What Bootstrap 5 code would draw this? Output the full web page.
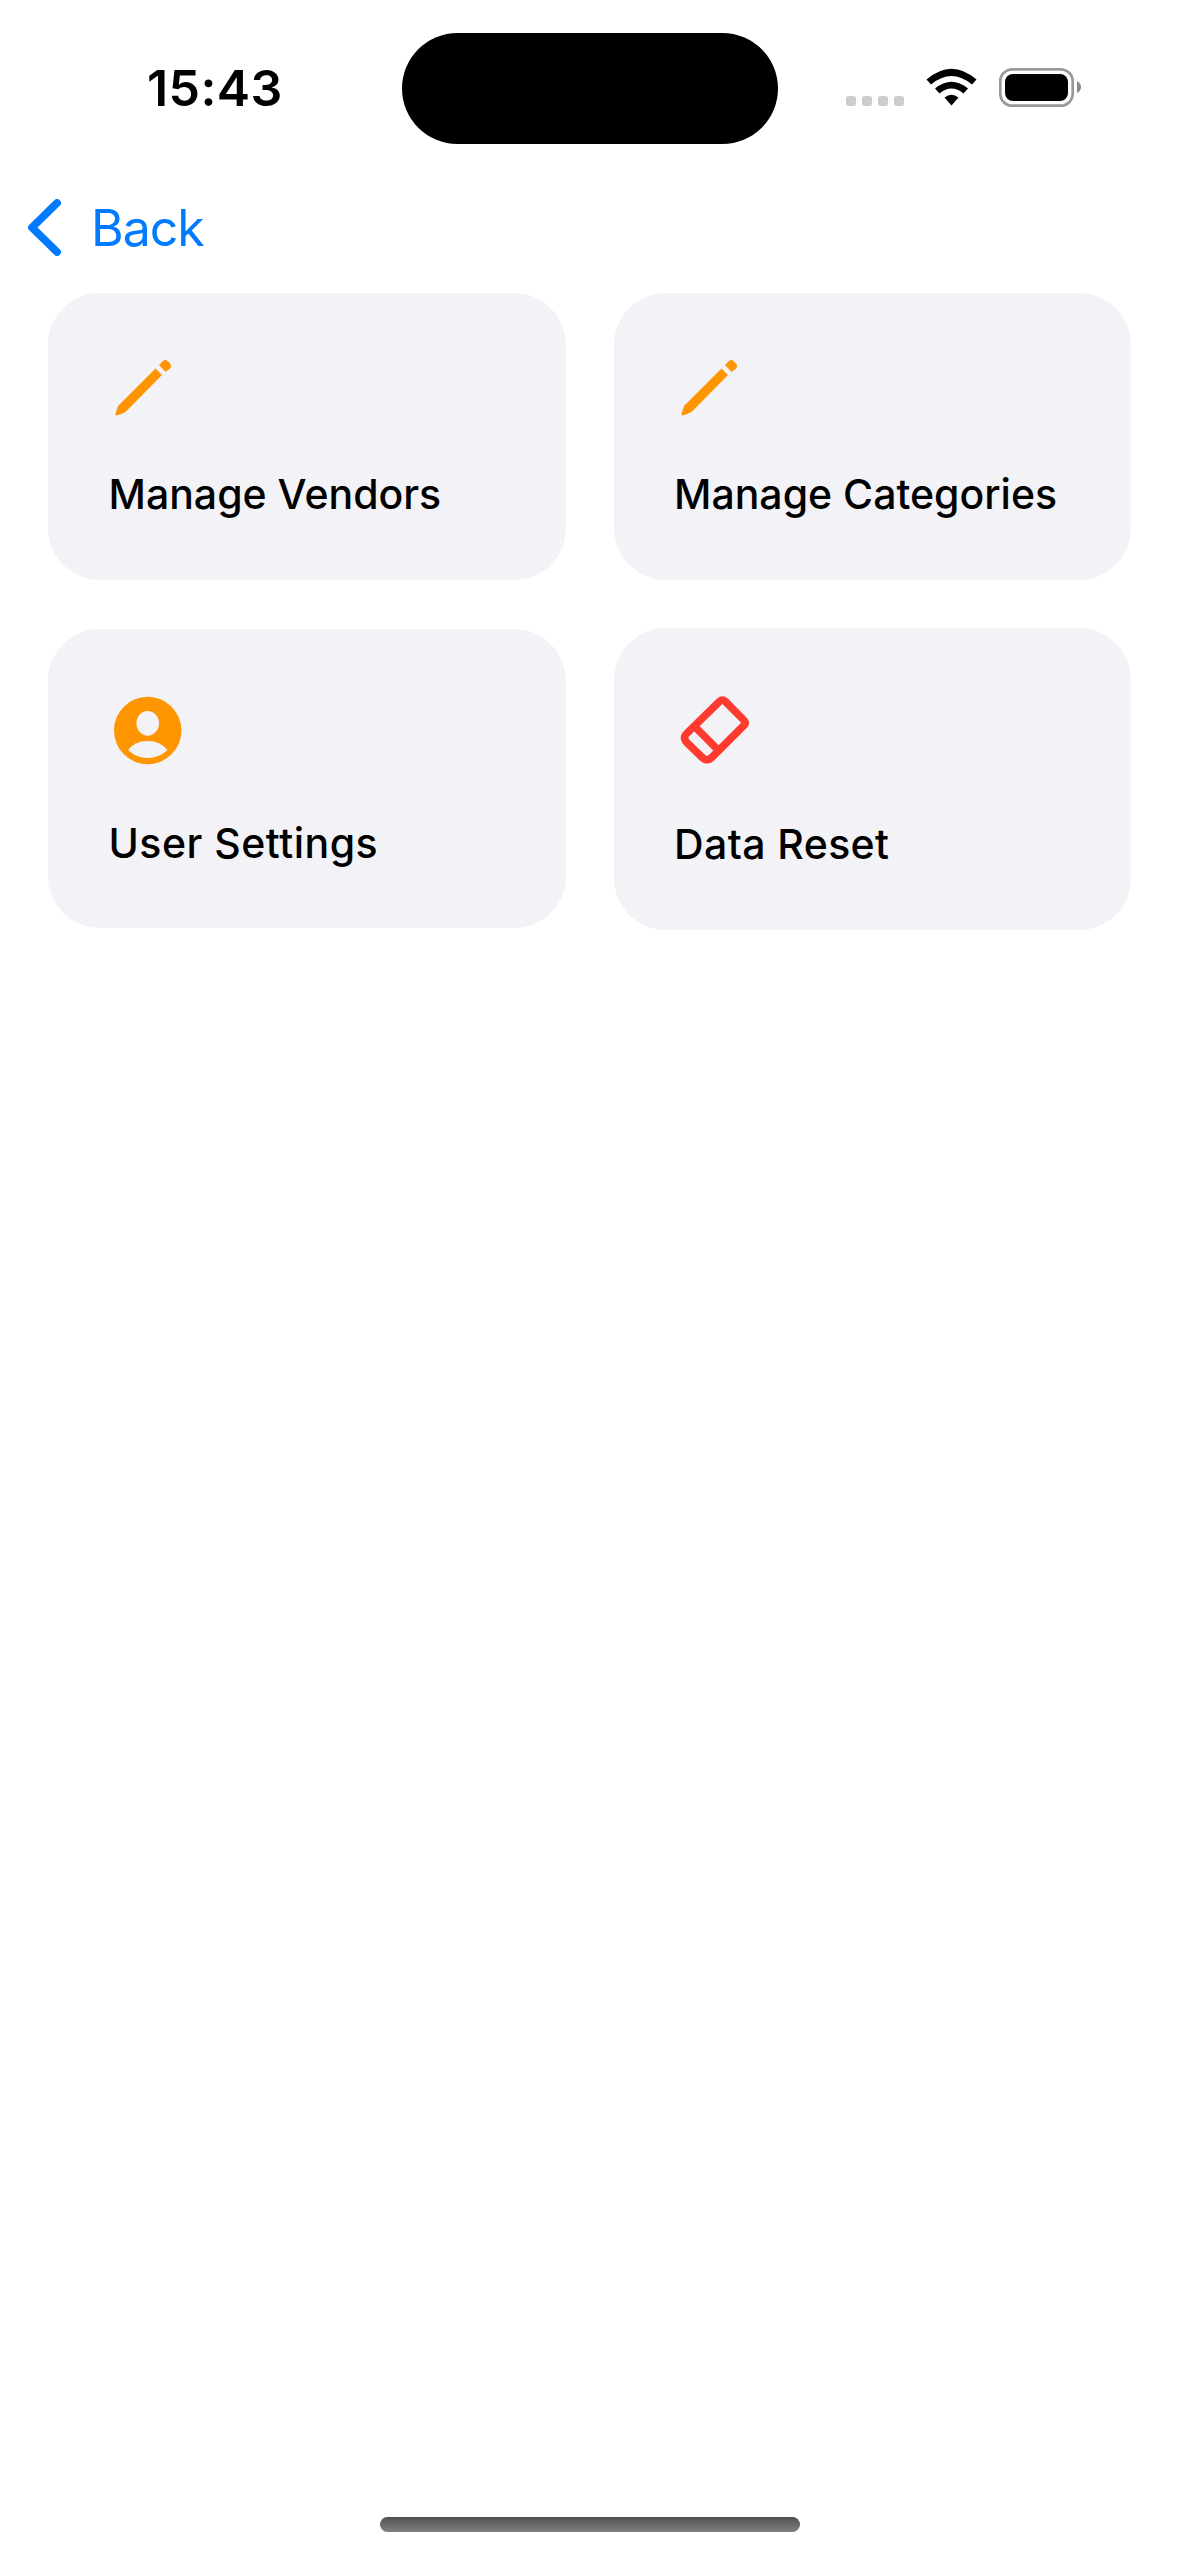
<!DOCTYPE html>
<html lang="en">
<head>
<meta charset="utf-8">
<meta name="viewport" content="width=device-width, initial-scale=1">
<title>Settings</title>
<link href="https://cdn.jsdelivr.net/npm/bootstrap@5.3.0/dist/css/bootstrap.min.css" rel="stylesheet">
<style>
body{font-family:Inter,"Liberation Sans",sans-serif;color:#000;background:#fff}
svg{display:block;flex:none}
.screen{height:2556px;overflow:hidden}
.status-bar{height:176px;padding:33px 98px 0 147px}
.clock{width:254.500px;font-size:50px;line-height:60px;font-weight:600;padding-top:25px;white-space:nowrap;letter-spacing:.4px}
.island{width:376px;height:111px;background:#000}
.signals{padding-top:35px}
.back-row{height:117px;padding:20px 0 0 28px}
.back-link{color:#007aff;font-size:50px;line-height:60px;gap:30px;letter-spacing:-1px}
.back-link span{padding-top:2px}
.tiles{padding:0 48px;gap:48px}
.tile-row{gap:48px}
.tile{flex:1 1 0;background:#f2f2f7;border:0;border-radius:52px;padding:0 0 0 62px}
.tile-title{font-size:41px;line-height:50px;font-weight:500;white-space:nowrap;margin:0 0 0 -1.5px}
.t-pencil{height:287px;padding-top:66px}
.t-user{height:299px;padding-top:67px;margin-bottom:1px}
.t-reset{height:302px;padding-top:67px}
.t-pencil .tile-title{margin-top:52px}
.t-user .tile-title{margin-top:52px;letter-spacing:.5px}
.t-reset .tile-title{margin-top:54px;letter-spacing:.4px}
.home-bar{width:420px;height:15px;margin-bottom:24px;background:linear-gradient(#505050,#808080)}
</style>
</head>
<body>
<div class="screen d-flex flex-column">
<header class="status-bar d-flex align-items-start">
<div class="clock">15:43</div>
<div class="island rounded-pill"></div>
<div class="signals d-flex ms-auto">
<svg width="235" height="40" viewBox="846 68 235 40">
<g fill="#ccc"><rect x="846" y="96" width="10" height="10" rx="3"/><rect x="862" y="96" width="10" height="10" rx="3"/><rect x="878" y="96" width="10" height="10" rx="3"/><rect x="894" y="96" width="10" height="10" rx="3"/></g>
<path d="M926.5 79.5Q951.5 58 976.500 79.500L972 84.500Q951.500 67.500 931 84.500Z M935 88.500Q951.500 75 968 88.500L963.500 93.500Q951.500 83.500 939.500 93.500Z M944.500 97.500Q951.500 92 958.500 97.500L951.500 105.500Z"/>
<rect x="1000.300" y="69.300" width="72.400" height="36.400" rx="12" fill="none" stroke="#999" stroke-width="2.700"/>
<rect x="1005" y="74" width="63" height="27" rx="8"/>
<path d="M1077 81Q1081 83 1081 87T1077 93Z" fill="#8a8a8a"/>
</svg>
</div>
</header>
<nav class="back-row">
<a href="#" class="back-link d-inline-flex align-items-center text-decoration-none">
<svg width="33" height="57" viewBox="0 0 33 57"><path d="M29 4L4 28.500L29 53" fill="none" stroke="#007aff" stroke-width="7.800" stroke-linecap="round" stroke-linejoin="round"/></svg>
<span>Back</span></a>
</nav>
<main class="tiles d-flex flex-column">
<div class="tile-row d-flex align-items-center">
<div class="tile card t-pencil">
<svg width="62" height="58" viewBox="0 0 62 58" fill="#ff9500"><path d="M45.500 9.500L52 16L15.500 53Q10 56 6.500 56.500Q5 56.500 5.500 54.500L8 47Z"/><path d="M49 6L53 2Q55.500 0 58 2.500L60 4.500Q62 7 60 9.500L55.500 13Z"/></svg>
<h2 class="tile-title">Manage Vendors</h2></div>
<div class="tile card t-pencil">
<svg width="62" height="58" viewBox="0 0 62 58" fill="#ff9500"><path d="M45.500 9.500L52 16L15.500 53Q10 56 6.500 56.500Q5 56.500 5.500 54.500L8 47Z"/><path d="M49 6L53 2Q55.500 0 58 2.500L60 4.500Q62 7 60 9.500L55.500 13Z"/></svg>
<h2 class="tile-title">Manage Categories</h2></div>
</div>
<div class="tile-row d-flex align-items-center">
<div class="tile card t-user">
<svg width="76" height="70" viewBox="0 0 76 70"><circle cx="37.700" cy="34.500" r="33.700" fill="#ff9500"/><ellipse cx="37.700" cy="27.300" rx="11.300" ry="12.400" fill="#f2f2f7"/><path d="M18 54Q25 45 37.700 45T57.500 54Q49 62 37.700 62T18 54Z" fill="#f2f2f7"/></svg>
<h2 class="tile-title">User Settings</h2></div>
<div class="tile card t-reset">
<svg width="76" height="70" viewBox="0 0 76 70" fill="none" stroke="#ff3b30" stroke-width="7.600"><path d="M43.700 6.300Q46.400 3.600 49.100 6.300L67.800 25.100Q70.500 27.800 67.800 30.500L36 62.300Q31 67.300 26 62.300L11 47.700Q6 42.700 11 38.200ZM18.600 31.400L42.700 55.600"/></svg>
<h2 class="tile-title">Data Reset</h2></div>
</div>
</main>
<div class="home-bar rounded-pill mt-auto mx-auto"></div>
</div>
<script src="https://cdn.jsdelivr.net/npm/bootstrap@5.3.0/dist/js/bootstrap.bundle.min.js"></script>
</body>
</html>
